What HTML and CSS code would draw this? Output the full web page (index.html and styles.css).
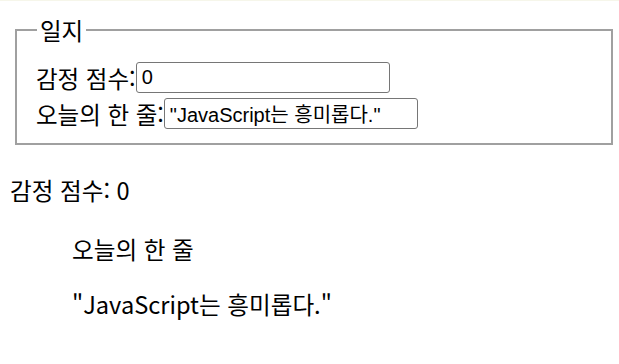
FILE: index.html
```html
<!DOCTYPE html>
<html lang="ko">
<head>
<meta charset="utf-8">
<title>일지</title>
<link rel="stylesheet" href="styles.css">
</head>
<body>
<div class="page">
  <fieldset class="journal">
    <legend class="journal-title">일지</legend>
    <div class="row">
      <label class="field-label" for="score">감정 점수:</label>
      <input class="field-input" id="score" type="text" value="0">
    </div>
    <div class="row">
      <label class="field-label" for="line">오늘의 한 줄:</label>
      <input class="field-input" id="line" type="text" value="&quot;JavaScript는 흥미롭다.&quot;">
    </div>
  </fieldset>
  <p class="score-out">감정 점수: 0</p>
  <div class="quote">
    <p class="quote-title">오늘의 한 줄</p>
    <p class="quote-text">"JavaScript는 흥미롭다."</p>
  </div>
</div>
</body>
</html>
```
FILE: styles.css
```css
html, body {
  margin: 0;
  padding: 0;
  background: #ffffff;
}
body {
  border-top: 1px solid #f6f6ea;
  font-family: "Noto Sans CJK KR", "Noto Sans", sans-serif;
  font-size: 23.6px;
  color: #000000;
}
.page {
  padding: 0 6px 0 10px;
}
.journal {
  margin: 14px 0 0 5px;
  padding: 17px 17px 14px 19px;
  border: 2px solid #a0a0a0;
  display: flex;
  flex-direction: column;
  gap: 5px;
}
.journal-title {
  padding: 0 3px;
  margin-left: 1px;
  font-size: 23.5px;
  line-height: 30px;
}
.row {
  display: flex;
  align-items: center;
  height: 31px;
}
.field-label {
  font-size: 23.5px;
  line-height: 30px;
}
.field-input {
  box-sizing: border-box;
  width: 254px;
  height: 31px;
  margin: 0;
  padding: 0 5px;
  border: 1px solid #767676;
  border-radius: 3px;
  font-family: "Liberation Sans", "Noto Sans CJK KR", sans-serif;
  font-size: 20px;
  color: #000000;
  background: #ffffff;
}
.score-out {
  margin: 29px 0 0 0;
  line-height: 32px;
}
.quote {
  padding-left: 62px;
}
.quote-title {
  margin: 27px 0 0 0;
  line-height: 32px;
}
.quote-text {
  margin: 23px 0 0 0;
  line-height: 32px;
}
```
